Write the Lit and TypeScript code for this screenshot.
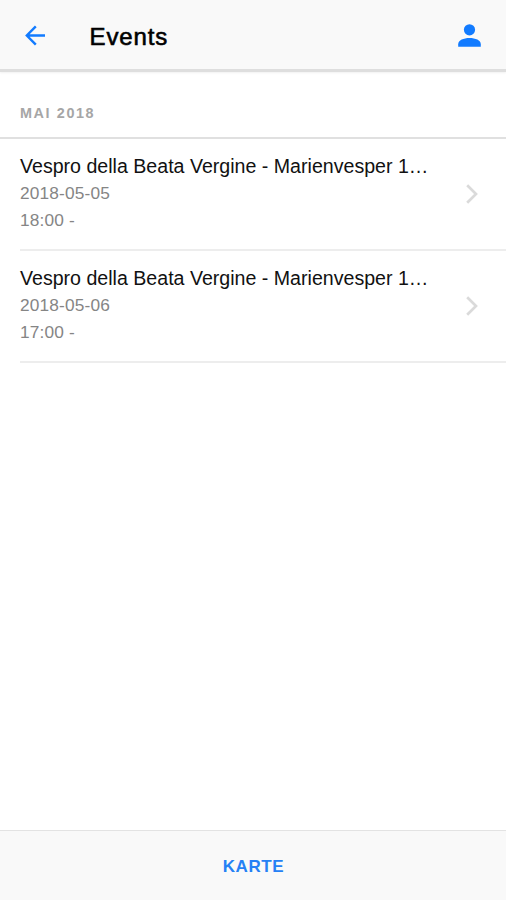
import { LitElement, html, css } from "lit";
import { customElement, property } from "lit/decorators.js";

@customElement("event-item")
class EventItem extends LitElement {
  @property() heading = "";
  @property() date = "";
  @property() time = "";

  static styles = css`
    :host {
      display: flex;
      align-items: center;
      box-sizing: border-box;
      height: 112px;
      margin-left: 20px;
      padding-right: 27px;
      border-bottom: 2px solid #ededed;
    }
    .text {
      flex: 1;
      min-width: 0;
      padding-bottom: 2px;
    }
    .heading,
    .meta {
      line-height: 27px;
      white-space: nowrap;
    }
    .heading {
      font-size: 19.6px;
      color: #111;
    }
    .meta {
      font-size: 17.3px;
      color: #858585;
      letter-spacing: 0.16px;
    }
    svg {
      display: block;
      width: 14px;
      height: 22px;
    }
  `;

  render() {
    return html`
      <div class="text">
        <div class="heading">${this.heading}</div>
        <div class="meta">${this.date}</div>
        <div class="meta">${this.time}</div>
      </div>
      <svg viewBox="0 0 14 22" fill="none" stroke="#dadada" stroke-width="2.7">
        <path d="M2.2 2.2 L11 11 L2.2 19.8" />
      </svg>
    `;
  }
}

@customElement("app-root")
class AppRoot extends LitElement {
  static styles = css`
    :host {
      display: flex;
      flex-direction: column;
      height: 900px;
      background: #fff;
      font-family: "Liberation Sans", Arial, sans-serif;
    }
    header {
      display: flex;
      align-items: center;
      box-sizing: border-box;
      height: 72px;
      padding: 1px 25px 0;
      background: #f9f9f9;
      border-bottom: 3px solid #dedede;
      box-shadow: 0 1px 2px rgba(0, 0, 0, 0.06);
    }
    .back {
      width: 21px;
      height: 21px;
    }
    .person {
      width: 23px;
      height: 23px;
    }
    h1 {
      flex: 1;
      margin: 3px 0 0 43.5px;
      font-size: 24px;
      font-weight: 400;
      line-height: 30px;
      letter-spacing: 0.9px;
      color: #000;
      -webkit-text-stroke: 0.6px #000;
    }
    h2 {
      box-sizing: border-box;
      height: 67px;
      margin: 0;
      padding: 31px 0 0 20px;
      border-bottom: 2px solid #e0e0e0;
      font-size: 14.4px;
      line-height: 20px;
      letter-spacing: 1.6px;
      color: #a6a6a6;
    }
    main {
      flex: 1;
    }
    footer {
      display: flex;
      align-items: center;
      justify-content: center;
      box-sizing: border-box;
      height: 70px;
      border-top: 1px solid #e3e3e3;
      padding: 2px 0 0 1px;
      background: #f9f9f9;
      color: #2581f5;
      font-size: 17px;
      font-weight: 700;
      letter-spacing: 0.6px;
    }
  `;

  private events = [
    { date: "2018-05-05", time: "18:00 -" },
    { date: "2018-05-06", time: "17:00 -" },
  ];

  render() {
    return html`
      <header>
        <svg class="back" viewBox="0 0 21 21" fill="none" stroke="#127bff" stroke-width="2.4">
          <path d="M10.8 1.3 L1.8 10.5 L10.8 19.7 M1.8 10.5 H20" />
        </svg>
        <h1>Events</h1>
        <svg class="person" viewBox="0 0 23 23" fill="#127bff">
          <circle cx="11.5" cy="5.8" r="5.6" />
          <path d="M0.2 22.8 V20.3 C0.2 16.2 5.6 14 11.5 14 S22.8 16.2 22.8 20.3 V22.8 Z" />
        </svg>
      </header>
      <main>
        <h2>MAI 2018</h2>
        ${this.events.map(
          (e) => html`<event-item
            .heading=${"Vespro della Beata Vergine - Marienvesper 1…"}
            .date=${e.date}
            .time=${e.time}
          ></event-item>`
        )}
      </main>
      <footer>KARTE</footer>
    `;
  }
}
